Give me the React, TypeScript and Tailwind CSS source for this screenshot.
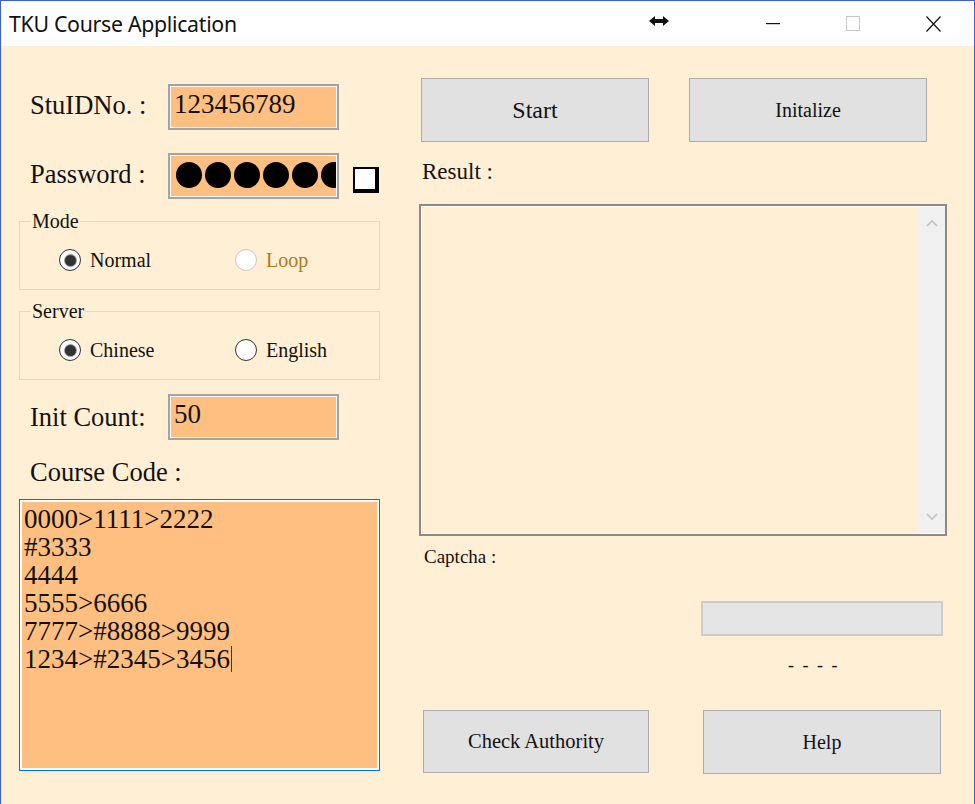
import React from 'react';

const serif = "font-['Liberation_Serif','DejaVu_Serif',serif]";

const Radio: React.FC<{ checked?: boolean; disabled?: boolean; label: string }> = ({ checked, disabled, label }) => (
    <div className="flex items-center">
        <div
            className={`w-[22px] h-[22px] rounded-full border flex items-center justify-center bg-white ${
                disabled ? 'border-[#cfc6b8]' : 'border-[#333333]'
            }`}
        >
            {checked && <div className="w-[11px] h-[11px] rounded-full bg-[#333333] ring-1 ring-[#9a9a9a]" />}
        </div>
        <span className={`ml-[9px] text-[20px] leading-none ${disabled ? 'text-[#b07a1a]' : 'text-[#111]'}`}>{label}</span>
    </div>
);

const Field: React.FC<{ children?: React.ReactNode }> = ({ children }) => (
    <div className="w-[171px] h-[46px] border-2 border-[#a3a3a3]">
        <div className="w-full h-full border border-[#f7f7f7] bg-[#ffbf80] overflow-hidden pl-[3px] pt-[3px] text-[27px] leading-[28px] text-[#111]">
            {children}
        </div>
    </div>
);

const Group: React.FC<{ title: string; children: React.ReactNode }> = ({ title, children }) => (
    <fieldset className="w-[361px] h-[81px] border border-[#d6dbe2]">
        <legend className="ml-[11px] px-[1px] text-[20px] leading-[24px] text-[#111]">{title}</legend>
        <div className="flex items-center mt-[16px] pl-[39px]">{children}</div>
    </fieldset>
);

const Button: React.FC<{ label: string; className: string; textSize: string }> = ({ label, className, textSize }) => (
    <div className={`bg-[#e1e1e1] border border-[#adadad] flex items-center justify-center text-[#111] ${textSize} ${className}`}>
        {label}
    </div>
);

const Chevron: React.FC<{ up?: boolean }> = ({ up }) => (
    <svg width="12" height="8" viewBox="0 0 12 8">
        <polyline
            points={up ? '1,7 6,2 11,7' : '1,1 6,6 11,1'}
            fill="none"
            stroke="#c2c2c2"
            strokeWidth="1.6"
        />
    </svg>
);

export default function App() {
    const courseLines = ['0000>1111>2222', '#3333', '4444', '5555>6666', '7777>#8888>9999', '1234>#2345>3456'];

    return (
        <div className="w-[975px] h-[804px] border-l border-t border-r border-[#3f5fcf] flex flex-col overflow-hidden">
            {/* title bar */}
            <div className="h-[45px] bg-white flex items-center font-['Noto_Sans',sans-serif] text-[#111]">
                <span className="ml-[8px] text-[21.3px] tracking-[-0.3px]">TKU Course Application</span>
                <div className="ml-auto flex items-center">
                    <svg width="20" height="12" viewBox="0 0 20 12" className="mr-[97px] -mt-[6px]">
                        <path d="M0 6 L6 1 L6 4 L14 4 L14 1 L20 6 L14 11 L14 8 L6 8 L6 11 Z" fill="#111" />
                    </svg>
                    <svg width="14" height="2" viewBox="0 0 14 2" className="mr-[66px]">
                        <rect x="0" y="0" width="14" height="1.2" fill="#111" />
                    </svg>
                    <svg width="14" height="15" viewBox="0 0 14 15" className="mr-[66px]">
                        <rect x="0.5" y="0.5" width="13" height="14" fill="none" stroke="#c9c9c9" strokeWidth="1" />
                    </svg>
                    <svg width="15" height="16" viewBox="0 0 15 16" className="mr-[33px]">
                        <path d="M0.5 0.5 L14.5 15.5 M14.5 0.5 L0.5 15.5" stroke="#111" strokeWidth="1.2" />
                    </svg>
                </div>
            </div>

            {/* body */}
            <div className={`flex-1 bg-[#ffefd5] flex ${serif}`}>
                {/* left column */}
                <div className="ml-[18px] w-[361px] flex flex-col">
                    <div className="mt-[38px] flex items-center">
                        <div className="w-[149px] pl-[11px] -mt-[3px] text-[26.5px] leading-none text-[#111]">StuIDNo. :</div>
                        <Field>123456789</Field>
                    </div>
                    <div className="mt-[23px] flex items-center">
                        <div className="w-[149px] pl-[11px] -mt-[3px] text-[26.5px] leading-none text-[#111]">Password :</div>
                        <Field>
                            <div className="flex items-center h-full gap-[3px] pl-[2px] -mt-[3px]">
                                {[0, 1, 2, 3, 4, 5].map((i) => (
                                    <div key={i} className="w-[26px] h-[26px] rounded-full bg-black shrink-0" />
                                ))}
                            </div>
                        </Field>
                        <div className="ml-[14px] mt-[8px] w-[26px] h-[26px] bg-white border-2 border-black border-r-[4px] border-b-[4px]" />
                    </div>

                    <div className="mt-[10px]">
                        <Group title="Mode">
                            <div className="w-[176px]">
                                <Radio checked label="Normal" />
                            </div>
                            <Radio disabled label="Loop" />
                        </Group>
                    </div>
                    <div className="mt-[9px]">
                        <Group title="Server">
                            <div className="w-[176px]">
                                <Radio checked label="Chinese" />
                            </div>
                            <Radio label="English" />
                        </Group>
                    </div>

                    <div className="mt-[14px] flex items-center">
                        <div className="w-[149px] pl-[11px] text-[26.5px] leading-none text-[#111]">Init Count:</div>
                        <Field>50</Field>
                    </div>
                    <div className="mt-[17px] pl-[11px] text-[26.5px] leading-[30px] text-[#111]">Course Code :</div>
                    <div className="mt-[12px] w-[361px] h-[272px] border border-[#0078d7]">
                        <div className="w-full h-full border-2 border-white bg-[#ffbf80] pl-[2px] pt-[3px] text-[27px] leading-[28px] text-[#111]">
                            {courseLines.map((l, i) => (
                                <div key={i} className="flex items-center">
                                    {l}
                                    {i === courseLines.length - 1 && <span className="ml-px w-px h-[26px] bg-[#1a3a6a]" />}
                                </div>
                            ))}
                        </div>
                    </div>
                </div>

                {/* right column */}
                <div className="ml-[39px] w-[528px] flex flex-col">
                    <div className="mt-[32px] flex">
                        <Button label="Start" className="ml-[2px] w-[228px] h-[64px]" textSize="text-[24px]" />
                        <Button label="Initalize" className="ml-[40px] w-[238px] h-[64px]" textSize="text-[20px]" />
                    </div>
                    <div className="mt-[15px] pl-[3px] h-[30px] leading-[30px] text-[23px] text-[#111]">Result :</div>
                    <div className="mt-[17px] w-[528px] h-[332px] border-2 border-[#8a8a8a]">
                        <div className="w-full h-full border border-white border-r-0 flex">
                            <div className="flex-1" />
                            <div className="w-[27px] bg-[#f0f0f0] flex flex-col items-center justify-between py-[12px]">
                                <Chevron up />
                                <Chevron />
                            </div>
                        </div>
                    </div>
                    <div className="mt-[10px] pl-[5px] h-[22px] leading-[22px] text-[19px] text-[#111]">Captcha :</div>
                    <div className="mt-[33px] ml-[282px] w-[242px] h-[35px] bg-[#e5e5e5] border-2 border-[#cccccc]" />
                    <div className="mt-[19px] ml-[369px] h-[20px] leading-[20px] text-[18px] text-[#111] tracking-[2px]">- - - -</div>
                    <div className="mt-[35px] flex">
                        <Button label="Check Authority" className="ml-[4px] w-[226px] h-[63px]" textSize="text-[20.5px]" />
                        <Button label="Help" className="ml-[54px] w-[238px] h-[64px]" textSize="text-[20px]" />
                    </div>
                </div>
            </div>
        </div>
    );
}
